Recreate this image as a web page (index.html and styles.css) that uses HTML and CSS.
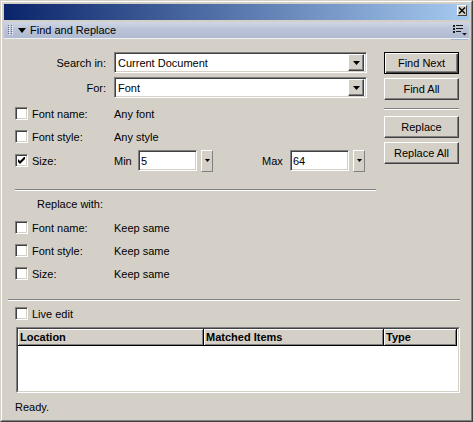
FILE: index.html
```html
<!DOCTYPE html>
<html>
<head>
<meta charset="utf-8">
<link rel="stylesheet" href="styles.css">
</head>
<body>
<div class="window">
  <div class="frame">
    <div class="titlebar">
      <span class="close-btn"><svg width="8" height="7" viewBox="0 0 8 7"><path d="M1 0.5 L7 6.5 M7 0.5 L1 6.5" stroke="#000" stroke-width="1.4" fill="none"/></svg></span>
    </div>
    <div class="panel-head">
      <svg class="grip" width="5" height="11" viewBox="0 0 5 11">
        <rect x="0" y="0" width="1" height="1" fill="#6a7084"/><rect x="1" y="1" width="1" height="1" fill="#fff"/>
        <rect x="0" y="2" width="1" height="1" fill="#6a7084"/><rect x="1" y="3" width="1" height="1" fill="#fff"/>
        <rect x="0" y="4" width="1" height="1" fill="#6a7084"/><rect x="1" y="5" width="1" height="1" fill="#fff"/>
        <rect x="0" y="6" width="1" height="1" fill="#6a7084"/><rect x="1" y="7" width="1" height="1" fill="#fff"/>
        <rect x="0" y="8" width="1" height="1" fill="#6a7084"/><rect x="1" y="9" width="1" height="1" fill="#fff"/>
        <rect x="3" y="0" width="1" height="1" fill="#6a7084"/><rect x="4" y="1" width="1" height="1" fill="#fff"/>
        <rect x="3" y="2" width="1" height="1" fill="#6a7084"/><rect x="4" y="3" width="1" height="1" fill="#fff"/>
        <rect x="3" y="4" width="1" height="1" fill="#6a7084"/><rect x="4" y="5" width="1" height="1" fill="#fff"/>
        <rect x="3" y="6" width="1" height="1" fill="#6a7084"/><rect x="4" y="7" width="1" height="1" fill="#fff"/>
        <rect x="3" y="8" width="1" height="1" fill="#6a7084"/><rect x="4" y="9" width="1" height="1" fill="#fff"/>
      </svg>
      <svg class="caret" width="8" height="5" viewBox="0 0 8 5"><polygon points="0,0 8,0 4,5" fill="#000"/></svg>
      <span class="panel-title">Find and Replace</span>
      <svg class="menu-icon" width="14" height="11" viewBox="0 0 14 11">
        <rect x="0" y="0" width="2" height="2" fill="#1a1a1a"/><rect x="3" y="0" width="7" height="1" fill="#1a1a1a"/>
        <rect x="0" y="3" width="2" height="2" fill="#1a1a1a"/><rect x="3" y="3" width="7" height="1" fill="#1a1a1a"/>
        <rect x="0" y="6" width="2" height="2" fill="#1a1a1a"/><rect x="3" y="6" width="5" height="1" fill="#1a1a1a"/>
        <polygon points="9,8 14,8 11.5,10.5" fill="#1a1a1a"/>
      </svg>
    </div>
    <div class="panel-body">
      <div class="upper">
        <div class="form">
          <div class="field-row">
            <span class="field-label">Search in:</span>
            <div class="select"><span class="select-value">Current Document</span><span class="drop-btn"><svg width="7" height="4" viewBox="0 0 7 4"><polygon points="0,0 7,0 3.5,4" fill="#000"/></svg></span></div>
          </div>
          <div class="field-row row-for">
            <span class="field-label">For:</span>
            <div class="select"><span class="select-value">Font</span><span class="drop-btn"><svg width="7" height="4" viewBox="0 0 7 4"><polygon points="0,0 7,0 3.5,4" fill="#000"/></svg></span></div>
          </div>
          <div class="check-row first">
            <span class="cb"></span><span class="cb-label">Font name:</span><span class="cb-value">Any font</span>
          </div>
          <div class="check-row">
            <span class="cb"></span><span class="cb-label">Font style:</span><span class="cb-value">Any style</span>
          </div>
          <div class="check-row size-row">
            <span class="cb"><svg class="tick" width="7" height="7" viewBox="0 0 7 7"><path d="M0 2 L2 4 L7 -1 L7 2 L2 7 L0 5 Z" fill="#000"/></svg></span>
            <span class="cb-label">Size:</span>
            <span class="range-label">Min</span>
            <span class="textbox">5</span>
            <span class="spin"><svg width="5" height="3" viewBox="0 0 5 3"><polygon points="0,0 5,0 2.5,3" fill="#000"/></svg></span>
            <span class="range-label max">Max</span>
            <span class="textbox">64</span>
            <span class="spin"><svg width="5" height="3" viewBox="0 0 5 3"><polygon points="0,0 5,0 2.5,3" fill="#000"/></svg></span>
          </div>
          <div class="sep sep-form"></div>
          <div class="section-title">Replace with:</div>
          <div class="check-row replace-first">
            <span class="cb"></span><span class="cb-label">Font name:</span><span class="cb-value">Keep same</span>
          </div>
          <div class="check-row">
            <span class="cb"></span><span class="cb-label">Font style:</span><span class="cb-value">Keep same</span>
          </div>
          <div class="check-row">
            <span class="cb"></span><span class="cb-label">Size:</span><span class="cb-value">Keep same</span>
          </div>
        </div>
        <div class="buttons">
          <div class="btn default">Find Next</div>
          <div class="btn">Find All</div>
          <div class="sep sep-btn"></div>
          <div class="btn">Replace</div>
          <div class="btn">Replace All</div>
        </div>
      </div>
      <div class="sep sep-full"></div>
      <div class="check-row live">
        <span class="cb"></span><span>Live edit</span>
      </div>
      <div class="results">
        <div class="results-inner">
          <div class="results-head">
            <div class="col col-loc">Location</div>
            <div class="col col-items">Matched Items</div>
            <div class="col col-type">Type</div>
          </div>
        </div>
      </div>
      <div class="status">Ready.</div>
    </div>
  </div>
</div>
</body>
</html>
```
FILE: styles.css
```css
* { box-sizing: border-box; }
html, body { margin: 0; padding: 0; }
body {
  font-family: "Liberation Sans", Arial, sans-serif;
  font-size: 11px;
  color: #000;
  background: #d4d0c8;
}
.window {
  width: 473px;
  height: 422px;
  border: 1px solid;
  border-color: #d4d0c8 #404040 #404040 #d4d0c8;
  background: #d4d0c8;
  display: flex;
  flex-direction: column;
}
.frame {
  flex: 1;
  border: 1px solid;
  border-color: #fff #808080 #808080 #fff;
  padding: 2px;
  display: flex;
  flex-direction: column;
}
.titlebar {
  height: 16px;
  flex: none;
  background: linear-gradient(to right, #0a246a, #a6caf0);
  display: flex;
  justify-content: flex-end;
  align-items: flex-start;
  padding: 1px 2px 0 0;
  margin-bottom: 2px;
}
.close-btn {
  width: 10px;
  height: 11px;
  background: #d4d0c8;
  border: 1px solid;
  border-color: #fff #404040 #404040 #fff;
  display: flex;
  align-items: center;
  justify-content: center;
}
.panel-head {
  position: relative;
  height: 17px;
  flex: none;
  background: linear-gradient(to bottom, #d0d6e4 0%, #bac3d8 45%, #b0bad1 100%);
  border-bottom: 1px solid #eef0f5;
  display: flex;
  align-items: center;
  padding-left: 4px;
}
.panel-head::after {
  content: "";
  position: absolute;
  right: 1px;
  bottom: -2px;
  width: 17px;
  height: 1px;
  background: #9fb6d8;
}
.grip { margin-right: 5px; }
.caret { margin-right: 4px; }
.panel-title { line-height: 13px; }
.menu-icon { margin-left: auto; margin-right: 2px; margin-top: 1px; }

.panel-body {
  flex: 1;
  display: flex;
  flex-direction: column;
  padding: 13px 9px 0 4px;
}
.upper {
  display: flex;
  align-items: flex-start;
  gap: 8px;
  margin-left: 7px;
}
.form {
  width: 361px;
  display: flex;
  flex-direction: column;
}
.field-row {
  display: flex;
  align-items: center;
  height: 21px;
}
.row-for { margin-top: 4px; }
.field-label {
  width: 91px;
  text-align: right;
  margin-right: 8px;
}
.select {
  width: 253px;
  height: 21px;
  background: #fff;
  border: 1px solid;
  border-color: #808080 #fff #fff #808080;
  box-shadow: inset 1px 1px #404040, inset -1px -1px #d4d0c8;
  display: flex;
  align-items: center;
  padding: 0 2px 0 2px;
}
.select-value { flex: 1; padding-left: 1px; }
.drop-btn {
  width: 16px;
  height: 17px;
  background: #d4d0c8;
  border: 1px solid;
  border-color: #fff #404040 #404040 #fff;
  box-shadow: inset -1px -1px #808080;
  display: flex;
  align-items: center;
  justify-content: center;
}
.check-row {
  display: flex;
  align-items: center;
  height: 21px;
  margin-top: 2px;
}
.check-row.first { margin-top: 5px; }
.check-row.size-row { margin-top: 3px; }
.check-row.replace-first { margin-top: 6px; }
.cb {
  width: 13px;
  height: 13px;
  flex: none;
  background: #fff;
  border: 1px solid;
  border-color: #808080 #fff #fff #808080;
  box-shadow: inset 1px 1px #404040, inset -1px -1px #d4d0c8;
  margin-right: 4px;
  display: flex;
  align-items: center;
  justify-content: center;
}
.cb-label { width: 82px; }
.range-label { width: 24px; }
.range-label.max { width: 28px; margin-left: 49px; }
.textbox {
  width: 59px;
  height: 21px;
  background: #fff;
  border: 1px solid;
  border-color: #808080 #fff #fff #808080;
  box-shadow: inset 1px 1px #404040, inset -1px -1px #d4d0c8;
  display: flex;
  align-items: center;
  padding-left: 2px;
}
.spin {
  width: 12px;
  height: 22px;
  margin-left: 4px;
  background: #d4d0c8;
  border: 1px solid;
  border-color: #fff #808080 #808080 #fff;
  display: flex;
  align-items: center;
  justify-content: center;
}
.sep {
  height: 2px;
  border-top: 1px solid #808080;
  border-bottom: 1px solid #fff;
}
.sep-form { margin-top: 18px; }
.section-title {
  margin-top: 7px;
  line-height: 13px;
  padding-left: 22px;
}
.buttons {
  width: 75px;
  display: flex;
  flex-direction: column;
}
.btn {
  height: 22px;
  margin-bottom: 4px;
  background: #d4d0c8;
  border: 1px solid;
  border-color: #fff #404040 #404040 #fff;
  box-shadow: inset -1px -1px #808080;
  display: flex;
  align-items: center;
  justify-content: center;
}
.btn.default {
  border-color: #000;
  box-shadow: inset 1px 1px #fff, inset -1px -1px #404040, inset -2px -2px #808080;
}
.sep-btn { margin: 4px 0 6px; }
.sep-full { margin-top: 15px; }
.check-row.live { margin-top: 2px; margin-left: 7px; }
.results {
  margin-top: 3px;
  margin-left: 8px;
  height: 66px;
  border: 1px solid;
  border-color: #808080 #fff #fff #808080;
}
.results-inner {
  height: 100%;
  border: 1px solid;
  border-color: #404040 #d4d0c8 #d4d0c8 #404040;
  background: #fff;
}
.results-head {
  display: flex;
  height: 17px;
}
.col {
  height: 17px;
  background: #d4d0c8;
  border-right: 1px solid #000;
  border-bottom: 1px solid #000;
  box-shadow: inset 1px 1px #fff, inset -1px -1px #808080;
  font-weight: bold;
  display: flex;
  align-items: center;
  padding-left: 2px;
}
.col-loc { width: 186px; }
.col-items { width: 180px; }
.col-type { width: 73px; }
.status {
  margin-top: 8px;
  margin-left: 7px;
  line-height: 13px;
}
```
